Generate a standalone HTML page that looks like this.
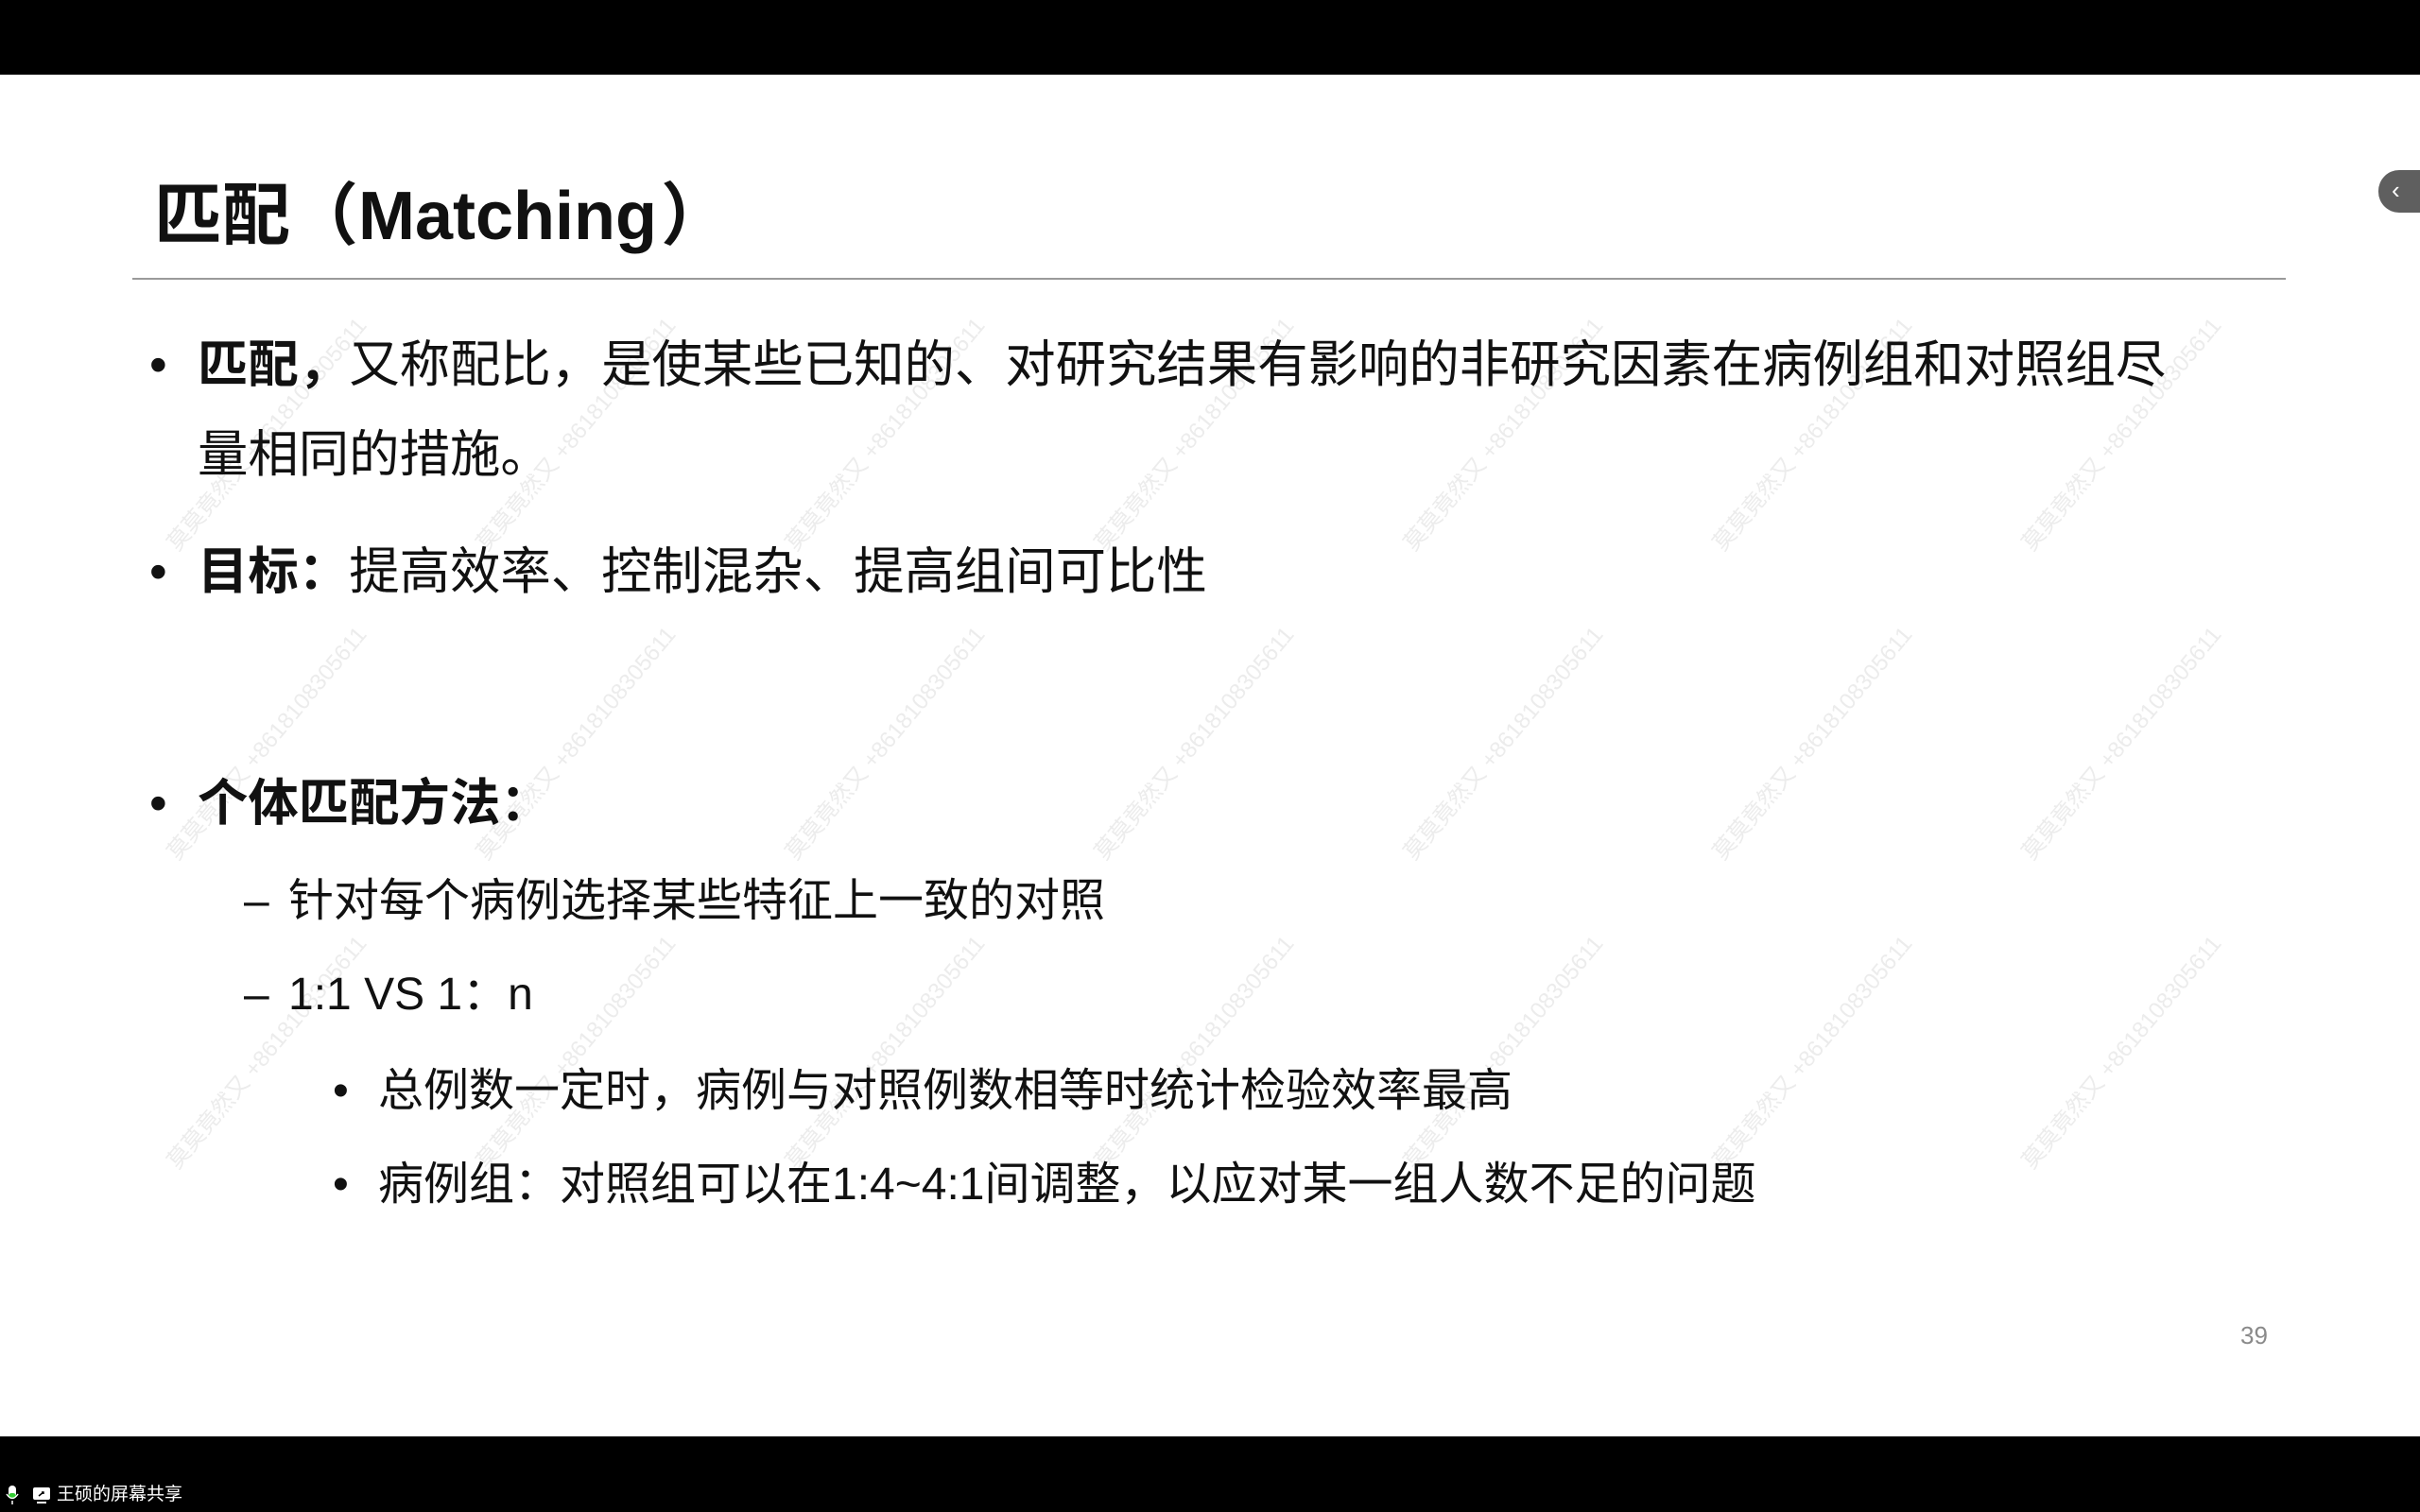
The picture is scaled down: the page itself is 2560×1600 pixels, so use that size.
<!DOCTYPE html>
<html><head><meta charset="utf-8"><style>
html,body{margin:0;padding:0;}
body{width:2560px;height:1600px;position:relative;background:#fff;overflow:hidden;font-family:"Liberation Sans","Noto Sans CJK SC",sans-serif;color:#111;}
.t{position:absolute;white-space:nowrap;line-height:1;}
.wm{position:absolute;white-space:nowrap;color:#ececec;font-size:24px;transform:rotate(-50deg);transform-origin:left center;}
</style></head><body>
<div id="wms"></div>

<div style="position:absolute;left:0;top:0;width:2560px;height:79px;background:#000;z-index:5"></div>
<div style="position:absolute;left:0;top:1520px;width:2560px;height:80px;background:#000;z-index:5"></div>

<div class="t" style="left:163px;top:193px;font-size:72px;font-weight:bold;">匹配（Matching<span style="margin-left:4px">）</span></div>
<div style="position:absolute;left:140px;top:294px;width:2278px;height:2px;background:#9a9a9a"></div>

<div class="t" style="left:158px;top:360px;font-size:53.4px;">•</div>
<div class="t" style="left:209px;top:360px;font-size:53.4px;"><b>匹配，</b>又称配比，是使某些已知的、对研究结果有影响的非研究因素在病例组和对照组尽</div>
<div class="t" style="left:209px;top:455px;font-size:53.4px;">量相同的措施。</div>

<div class="t" style="left:158px;top:579px;font-size:53.4px;">•</div>
<div class="t" style="left:209px;top:579px;font-size:53.4px;"><b>目标：</b>提高效率、控制混杂、提高组间可比性</div>

<div class="t" style="left:158px;top:824px;font-size:53.4px;">•</div>
<div class="t" style="left:209px;top:824px;font-size:53.4px;font-weight:bold;">个体匹配方法：</div>

<div class="t" style="left:258px;top:930px;font-size:48px;">–</div>
<div class="t" style="left:305px;top:930px;font-size:48px;">针对每个病例选择某些特征上一致的对照</div>
<div class="t" style="left:258px;top:1029px;font-size:48px;">–</div>
<div class="t" style="left:305px;top:1029px;font-size:48px;">1:1 VS 1：n</div>

<div class="t" style="left:352px;top:1131px;font-size:48px;">•</div>
<div class="t" style="left:400px;top:1131px;font-size:48px;">总例数一定时，病例与对照例数相等时统计检验效率最高</div>
<div class="t" style="left:352px;top:1230px;font-size:48px;">•</div>
<div class="t" style="left:400px;top:1230px;font-size:48px;">病例组：对照组可以在1:4~4:1间调整，以应对某一组人数不足的问题</div>

<div class="t" style="left:2370px;top:1400px;font-size:26px;color:#8a8a8a;">39</div>

<div style="position:absolute;left:2516px;top:180px;width:44px;height:45px;background:#5f5f5f;border-radius:22px 0 0 22px;"></div>
<div class="t" style="left:2530px;top:188px;font-size:26px;color:#fff;">‹</div>

<svg style="position:absolute;left:6px;top:1572px;z-index:6" width="50" height="22" viewBox="0 0 50 22">
<rect x="3" y="0" width="8" height="14" rx="4" fill="#fff"/><rect x="3" y="8" width="8" height="6" rx="3" fill="#3c3"/>
<path d="M1 9 Q7 18 13 9" stroke="#fff" stroke-width="1.5" fill="none"/><line x1="7" y1="16" x2="7" y2="20" stroke="#fff" stroke-width="1.5"/>
<rect x="29" y="2" width="18" height="13" rx="2" fill="#fff"/><rect x="33" y="17" width="10" height="2" fill="#fff"/>
<path d="M35 11 L40 7 M38 7 L40 7 L40 9" stroke="#000" stroke-width="1.5" fill="none"/>
</svg>
<div class="t" style="left:60px;top:1572px;font-size:19px;color:#fff;z-index:6">王硕的屏幕共享</div>

<script>
var c=document.getElementById('wms'),h='';
for(var r=0;r<4;r++)for(var k=0;k<7;k++){
var x=180+k*327,y=740+r*327-180;
if(y>1420)continue;
h+='<div class="wm" style="left:'+x+'px;top:'+y+'px">莫莫竟然又 +8618108305611</div>';}
c.innerHTML=h;
</script>
</body></html>
